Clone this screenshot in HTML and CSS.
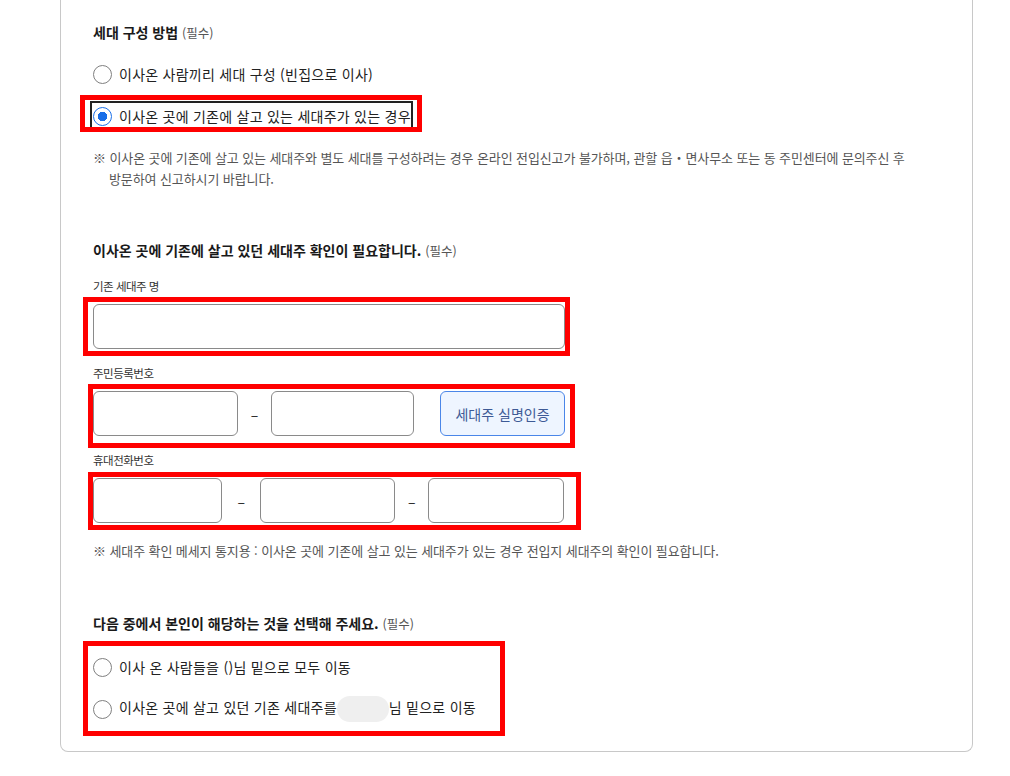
FILE: index.html
```html
<!DOCTYPE html>
<html lang="ko">
<head>
    <meta charset="UTF-8">
    <meta name="viewport" content="width=device-width, initial-scale=1.0">
    <title>전입신고 - 세대 구성</title>
    <link rel="stylesheet" href="styles.css">
</head>
<body>
    <div class="card">
        <h3 class="field-title">세대 구성 방법 <span class="req">(필수)</span></h3>

        <div class="radio-row first-choice">
            <input type="radio" name="house" id="house-new">
            <label for="house-new">이사온 사람끼리 세대 구성 (빈집으로 이사)</label>
        </div>

        <div class="mark mark-choice">
            <div class="focus-box">
                <input type="radio" name="house" id="house-join" checked>
                <label for="house-join">이사온 곳에 기존에 살고 있는 세대주가 있는 경우</label>
            </div>
        </div>

        <p class="note note-first">※ 이사온 곳에 기존에 살고 있는 세대주와 별도 세대를 구성하려는 경우 온라인 전입신고가 불가하며, 관할 읍・면사무소 또는 동 주민센터에 문의주신 후 방문하여 신고하시기 바랍니다.</p>

        <h3 class="field-title title-owner">이사온 곳에 기존에 살고 있던 세대주 확인이 필요합니다. <span class="req">(필수)</span></h3>

        <label class="sub-label label-name" for="owner-name">기존 세대주 명</label>
        <div class="mark mark-name">
            <input type="text" class="text-input input-name" id="owner-name">
        </div>

        <label class="sub-label label-id" for="owner-id1">주민등록번호</label>
        <div class="mark mark-id">
            <div class="input-row">
                <input type="text" class="text-input w-145" id="owner-id1">
                <span class="dash w-33">–</span>
                <input type="password" class="text-input w-143" id="owner-id2">
                <button type="button" class="btn-verify">세대주 실명인증</button>
            </div>
        </div>

        <label class="sub-label label-phone" for="owner-phone1">휴대전화번호</label>
        <div class="mark mark-phone">
            <div class="input-row">
                <input type="text" class="text-input w-129" id="owner-phone1">
                <span class="dash w-39">–</span>
                <input type="text" class="text-input w-135" id="owner-phone2">
                <span class="dash w-33">–</span>
                <input type="text" class="text-input w-136" id="owner-phone3">
            </div>
        </div>

        <p class="note note-second">※ 세대주 확인 메세지 통지용 : 이사온 곳에 기존에 살고 있는 세대주가 있는 경우 전입지 세대주의 확인이 필요합니다.</p>

        <h3 class="field-title title-self">다음 중에서 본인이 해당하는 것을 선택해 주세요. <span class="req">(필수)</span></h3>

        <div class="mark mark-move">
            <div class="radio-row">
                <input type="radio" name="move" id="move-all">
                <label for="move-all">이사 온 사람들을 ()님 밑으로 모두 이동</label>
            </div>
            <div class="radio-row">
                <input type="radio" name="move" id="move-owner">
                <label for="move-owner">이사온 곳에 살고 있던 기존 세대주를<span class="masked"></span>님 밑으로 이동</label>
            </div>
        </div>
    </div>
</body>
</html>
```

FILE: styles.css
```css
body {
    margin: 0;
    background-color: #ffffff;
    color: #222222;
    font-family: "Noto Sans CJK KR", "Noto Sans", sans-serif;
}

.card {
    box-sizing: border-box;
    width: 913px;
    margin-left: 60px;
    padding: 22px 32px 15px 32px;
    border: 1px solid #c8c8c8;
    border-top: none;
    border-radius: 0 0 8px 8px;
}

.field-title {
    margin: 0;
    height: 20px;
    font-size: 14px;
    line-height: 20px;
    font-weight: bold;
    color: #1a1a1a;
}
.req {
    font-size: 12.5px;
    line-height: 1;
    font-weight: normal;
    color: #555555;
}
.title-owner {
    margin-top: 51px;
}
.title-self {
    margin-top: 52px;
}

/* radios */
.radio-row {
    display: flex;
    align-items: center;
    height: 20px;
    font-size: 14px;
    line-height: 20px;
    letter-spacing: 0.25px;
    color: #222222;
}
.first-choice {
    margin-top: 22px;
}
.radio-row input[type="radio"],
.focus-box input[type="radio"] {
    appearance: none;
    -webkit-appearance: none;
    box-sizing: border-box;
    width: 19px;
    height: 19px;
    margin: 0 7px 0 0;
    border: 1px solid #808080;
    border-radius: 50%;
    background-color: #ffffff;
    flex-shrink: 0;
}
.focus-box input[type="radio"]:checked {
    border-color: #1a6fe8;
    background: radial-gradient(circle, #1a6fe8 0, #1a6fe8 4.5px, #ffffff 5px);
}

/* red review marks */
.mark {
    box-sizing: border-box;
    border: 5px solid #ff0000;
}
.mark-choice {
    display: inline-block;
    height: 37px;
    margin: 11px 0 0 -13px;
    padding: 1px 4px 0 5px;
    overflow: hidden;
    vertical-align: top;
}
.focus-box {
    display: flex;
    align-items: center;
    padding: 3px 0 6px 1px;
    border: 2px solid #222222;
    border-bottom: none;
    font-size: 14px;
    line-height: 20px;
    letter-spacing: 0.25px;
}
.mark-name {
    width: 487px;
    margin: 3px 0 0 -10px;
    padding: 2px 0 2px 5px;
}
.mark-id {
    width: 487px;
    margin: 3px 0 0 -5px;
    padding: 2px 5px 7px 0;
}
.mark-phone {
    width: 493px;
    margin: 4px 0 0 -5px;
    padding: 1px 12px 2px 0;
}
.mark-move {
    width: 422px;
    margin: 8px 0 0 -10px;
    padding: 11px 0 12px 5px;
    display: flex;
    flex-direction: column;
    gap: 22px;
}

.note {
    margin: 15px 0 0 0;
    padding-left: 16px;
    text-indent: -16px;
    font-size: 13px;
    line-height: 21px;
    letter-spacing: -0.1px;
    color: #555555;
    word-break: keep-all;
}
.note-second {
    margin-top: 10px;
}

.sub-label {
    display: block;
    height: 16px;
    font-size: 11.5px;
    line-height: 16px;
    letter-spacing: -0.5px;
    color: #333333;
}
.label-name {
    margin-top: 18px;
}
.label-id {
    margin-top: 9px;
}
.label-phone {
    margin-top: 4px;
}

.text-input {
    box-sizing: border-box;
    height: 45px;
    margin: 0;
    padding: 0 10px;
    border: 1px solid #8a8a8a;
    border-radius: 6px;
    font-size: 14px;
    font-family: inherit;
    background-color: #ffffff;
}
.input-name {
    display: block;
    width: 472px;
}

.input-row {
    display: flex;
    align-items: center;
}
.dash {
    text-align: center;
    font-size: 14px;
    color: #222222;
}
.w-129 { width: 129px; }
.w-135 { width: 135px; }
.w-136 { width: 136px; }
.w-143 { width: 143px; }
.w-145 { width: 145px; }
.w-33 { width: 33px; }
.w-39 { width: 39px; }

.btn-verify {
    box-sizing: border-box;
    width: 125px;
    height: 45px;
    margin-left: 26px;
    border: 1px solid #4a86e8;
    border-radius: 6px;
    background-color: #eef5ff;
    color: #3d5a96;
    font-size: 14px;
    font-family: inherit;
    cursor: pointer;
}

.masked {
    display: inline-block;
    width: 52px;
    height: 26px;
    border-radius: 13px;
    background-color: #efefef;
    vertical-align: middle;
}
```
